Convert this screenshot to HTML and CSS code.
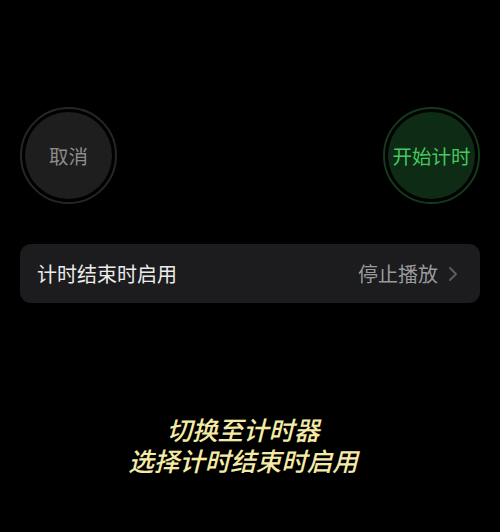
FILE: index.html
```html
<!DOCTYPE html>
<html lang="zh-CN">
<head>
<meta charset="utf-8">
<link rel="stylesheet" href="styles.css">
</head>
<body>
<div class="page">
  <div class="buttons">
    <div class="circle cancel"><div class="inner">取消</div></div>
    <div class="circle start"><div class="inner">开始计时</div></div>
  </div>
  <div class="row">
    <span class="label">计时结束时启用</span>
    <span class="value">停止播放
      <svg class="chev" width="10" height="16" viewBox="0 0 10 16"><path d="M2 2 L8 8 L2 14" fill="none" stroke="#5c5c60" stroke-width="2" stroke-linecap="round" stroke-linejoin="round"/></svg>
    </span>
  </div>
  <div class="caption">
    <div>切换至计时器</div>
    <div>选择计时结束时启用</div>
  </div>
</div>
</body>
</html>
```
FILE: styles.css
```css
html, body {
  margin: 0;
  padding: 0;
  background: #000;
}
body {
  width: 500px;
  height: 532px;
  overflow: hidden;
  font-family: "Noto Sans CJK SC", "Noto Sans", sans-serif;
}
.page {
  padding: 107px 20px 0 20px;
}
.buttons {
  display: flex;
  justify-content: space-between;
}
.circle {
  width: 97px;
  height: 97px;
  border-radius: 50%;
  box-sizing: border-box;
  padding: 3px;
  display: flex;
}
.circle .inner {
  flex: 1;
  border-radius: 50%;
  display: flex;
  align-items: center;
  justify-content: center;
  font-size: 19.5px;
}
.cancel {
  border: 2px solid #262626;
}
.cancel .inner {
  background: #1e1e1e;
  color: #8c8c8c;
}
.start {
  border: 2px solid #143a1e;
}
.start .inner {
  background: #0e2b16;
  color: #45c95e;
}
.row {
  margin-top: 40px;
  height: 59px;
  border-radius: 11px;
  background: #1c1c1e;
  display: flex;
  align-items: center;
  justify-content: space-between;
  padding: 0 22px 0 17px;
}
.label {
  color: #ececec;
  font-size: 20px;
}
.value {
  color: #9a9a9e;
  font-size: 20px;
  display: flex;
  align-items: center;
  gap: 10px;
}
.chev {
  display: block;
}
.caption {
  margin-top: 113px;
  text-align: center;
  color: #f6eba6;
  font-family: "Liberation Sans", "Noto Sans CJK SC", sans-serif;
  font-size: 25.5px;
  font-weight: 500;
  font-style: italic;
  line-height: 31px;
  margin-left: -14px;
  text-shadow: 0 0 2px #000, 0 0 2px #000;
}
```
